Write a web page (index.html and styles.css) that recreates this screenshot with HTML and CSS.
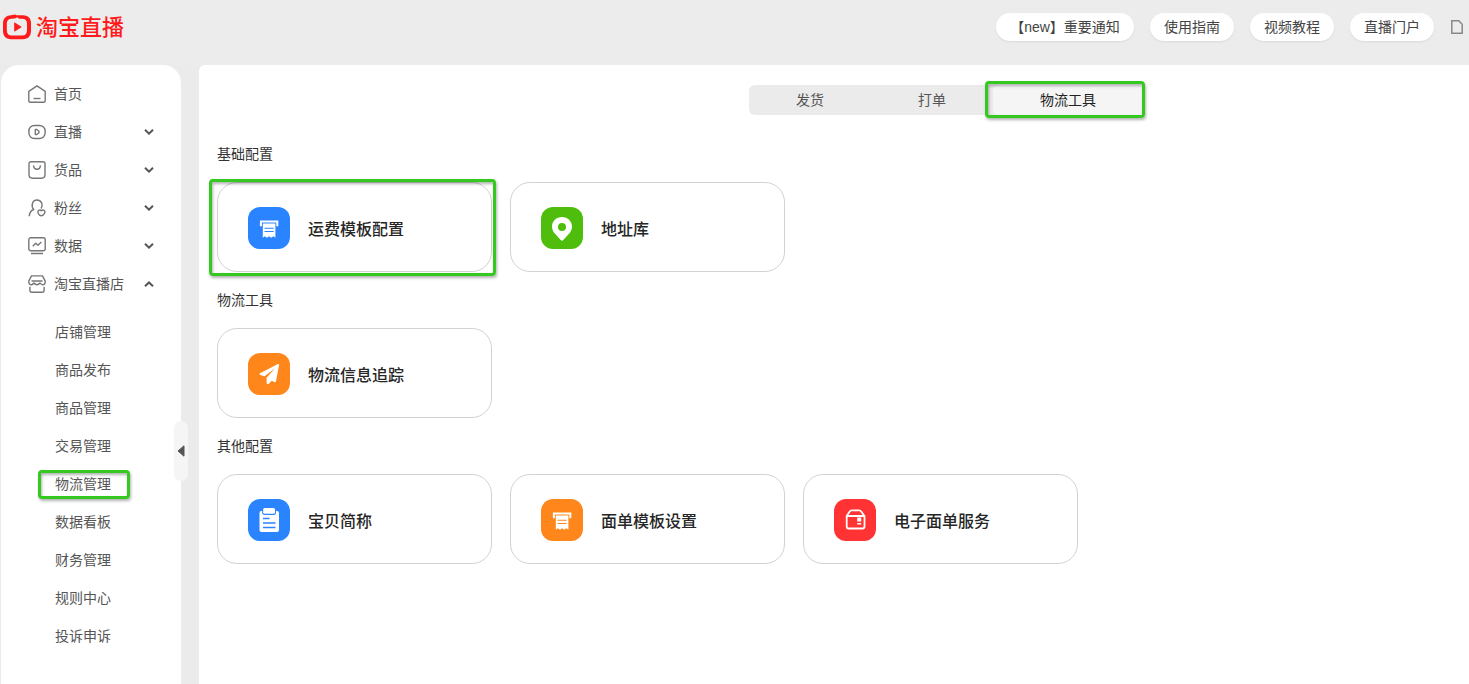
FILE: index.html
```html
<!DOCTYPE html>
<html lang="zh-CN">
<head>
<meta charset="utf-8">
<title>淘宝直播</title>
<link rel="stylesheet" href="styles.css">
</head>
<body>
<svg class="defs" width="0" height="0">
  <symbol id="chevron" viewBox="0 0 10 6"><path d="M1 .8 5 4.600 9 .8" fill="none" stroke="#555" stroke-width="2"/></symbol>
  <symbol id="receipt" viewBox="0 0 42 42"><path d="M12.900 19.300v-4.700h16.400v4.700" fill="none" stroke="#fff" stroke-width="2"/><path d="M14.800 16.500h12.600v14.300l-2-1.500-2.200 1.500-2.100-1.500-2.100 1.500-2.200-1.500-2 1.500z" fill="#fff"/><path d="M16.500 21.300h9.200M16.500 24.500h9.200" stroke="currentColor" stroke-width="1.100"/></symbol>
</svg>
<header class="header">
  <div class="logo">
    <svg width="30" height="26" viewBox="0 0 30 26"><path fill="#ff1b1b" fill-rule="evenodd" d="M10 1 13 .6l1.600.6h6.700c4.800.3 7.700 2.900 7.700 8v7.600c0 5.400-2.900 8.400-8 8.400H9c-5 0-8-3-8-8.400V9.200C1 4.300 4.500 1.200 9 1.200zM9.800 4.700C6.500 4.700 4.800 6.500 4.800 9.500v6.700c0 3.500 1.700 5.200 5 5.200h10.200c3.300 0 5-1.700 5-5.200V9.500c0-3.200-1.700-4.800-5-4.800h-3l-1.600-1.500-1.600 1z"/><path d="M12.600 8.800v8.400l6.600-4.200z" fill="#ff1b1b" stroke="#ff1b1b" stroke-width=".8" stroke-linejoin="round"/></svg>
    <span class="logo-text">淘宝直播</span>
  </div>
  <nav class="links">
    <a class="pill pill-new">【<span class="latin">new</span>】重要通知</a><a class="pill">使用指南</a><a class="pill">视频教程</a><a class="pill">直播门户</a>
    <svg class="doc" width="12" height="14" viewBox="0 0 12 14"><path d="M.8.8h7L11.200 4.200v9H.8z" fill="none" stroke="#888" stroke-width="1.500"/></svg>
  </nav>
</header>
<div class="body">
  <aside class="sidebar">
    <ul class="menu">
      <li><svg class="ico" viewBox="0 0 18 18"><path d="M.8 6.400 9 .8l8.200 5.600v9.300q0 1.500-1.500 1.500H2.300q-1.500 0-1.500-1.500z"/><path d="M5.500 13.500h7"/></svg><span>首页</span></li>
      <li><svg class="ico" viewBox="0 0 18 18"><rect x=".9" y="2.500" width="16.200" height="13" rx="5.500"/><path d="M7.300 6.500h1.500L11 8.200v1.600l-2.200 1.700H7.300z"/></svg><span>直播</span><svg class="chev"><use href="#chevron"/></svg></li>
      <li><svg class="ico" viewBox="0 0 18 18"><path d="M3 .8h12q2 0 2 2v10.700q0 3.700-3.500 3.700h-9Q1 17.200 1 13.500V2.800q0-2 2-2z"/><path d="M5.500 4.300q.5 3.900 3.500 3.900t3.500-3.900"/></svg><span>货品</span><svg class="chev"><use href="#chevron"/></svg></li>
      <li><svg class="ico" viewBox="0 0 18 18"><path d="M1.300 17.300c.1-3.800 1.500-5.800 4.500-6.800C2.800 7.500 4 1 9 1c5 0 6.300 5.300 4 8.500"/><path d="M13.200 11.800c1.500-1.800 4.800-.3 3.300 2.500-1 1.700-2 2.400-3.300 2.400s-2.300-.7-3-2.400c-1.200-2.800 1.700-4.300 3-2.500z"/></svg><span>粉丝</span><svg class="chev"><use href="#chevron"/></svg></li>
      <li><svg class="ico" viewBox="0 0 18 18"><rect x=".8" y=".8" width="16.400" height="13" rx="2"/><path d="M4.800 9.300 7.700 6.300l2.300 2L13.300 5M3 16.500h12"/></svg><span>数据</span><svg class="chev"><use href="#chevron"/></svg></li>
      <li><svg class="ico" viewBox="0 0 18 18"><path d="M3.500.9h11l2.700 5.200v1.600Q16.500 9.800 14.800 9.800T12 8q-1.300 1.700-3 1.700T6 8Q4.800 9.800 3.200 9.800T.8 7.700V6.100zM3.500 6h11M1.900 11.800v3.500q0 1.900 1.900 1.900h10.400q1.900 0 1.900-1.900v-3.500"/></svg><span>淘宝直播店</span><svg class="chev up"><use href="#chevron"/></svg></li>
    </ul>
    <ul class="submenu">
      <li>店铺管理</li><li>商品发布</li><li>商品管理</li><li>交易管理</li><li class="marked">物流管理</li><li>数据看板</li><li>财务管理</li><li>规则中心</li><li>投诉申诉</li>
    </ul>
    <div class="handle"><svg width="8" height="12" viewBox="0 0 8 12"><path d="M7 .8v10.400L1 6z" fill="#555" stroke="#555" stroke-linejoin="round"/></svg></div>
  </aside>
  <main class="main">
    <div class="tabs"><div class="tab">发货</div><div class="tab">打单</div><div class="tab active">物流工具</div></div>
    <section>
      <h2>基础配置</h2>
      <div class="cards">
        <div class="card marked"><svg class="tile blue" viewBox="0 0 42 42"><use href="#receipt"/></svg><span>运费模板配置</span></div>
        <div class="card"><svg class="tile green" viewBox="0 0 42 42"><path fill="#fff" fill-rule="evenodd" d="M21 10c-5.700 0-10 4.200-10 9.500 0 3 1.200 5.300 3 7.300l5.700 6.200q1.300 1.400 2.600 0l5.700-6.200c1.800-2 3-4.300 3-7.300C31 14.200 26.700 10 21 10zm0 6a4 4 0 1 1 0 8 4 4 0 0 1 0-8z"/></svg><span>地址库</span></div>
      </div>
    </section>
    <section>
      <h2>物流工具</h2>
      <div class="cards">
        <div class="card"><svg class="tile orange" viewBox="0 0 42 42"><path fill="#fff" d="M29.500 11.200c1-.4 1.700.2 1.500 1.200l-3 15.800c-.2 1-1 1.300-1.800.9l-2.500-1.300-2.800 3c-.8.7-2.200.4-2.300-.7v-5.400l8.300-9.200-10.300 7.700-4.500-1.300c-1-.4-1-1.200-.1-1.700z"/></svg><span>物流信息追踪</span></div>
      </div>
    </section>
    <section>
      <h2>其他配置</h2>
      <div class="cards">
        <div class="card"><svg class="tile blue" viewBox="0 0 42 42"><path fill="#fff" d="M13 12h1.200v1.500q0 2.500 2.500 2.500h8.800q2.500 0 2.500-2.500V12h1q2 0 2 2v17q0 2-2 2H13.500q-2 0-2-2V14q0-2 1.500-2z"/><rect x="15.200" y="9" width="11.800" height="5.800" rx="1.500" fill="#fff"/><path d="M15 19.500h6.500M15 24h12.500M15 28.500h12.500" stroke="currentColor" stroke-width="1.400"/></svg><span>宝贝简称</span></div>
        <div class="card"><svg class="tile orange" viewBox="0 0 42 42"><use href="#receipt"/></svg><span>面单模板设置</span></div>
        <div class="card"><svg class="tile red" viewBox="0 0 42 42"><path d="M12.700 17h17.800v10.500q0 2-2 2H14.700q-2 0-2-2zl2.800-4.300q1-1.300 2.200-1.300h7.500q1.200 0 2.200 1.300l3 4.300" fill="none" stroke="#fff" stroke-width="1.800" stroke-linejoin="round"/><path d="M23.200 18.500h4v4h-4zM23.200 24h4v1.600h-4z" fill="#fff"/></svg><span>电子面单服务</span></div>
      </div>
    </section>
  </main>
</div>
</body>
</html>
```
FILE: styles.css
```css
*, *::after { box-sizing: border-box; }
body { margin: 0; height: 684px; overflow: hidden; background: #ebebeb; color: #555; font: 14px/20px "Noto Sans CJK SC", sans-serif; }
ul { list-style: none; margin: 0; padding: 0; }
.defs { position: absolute; }
.header { height: 65px; background: #ececec; display: flex; justify-content: space-between; align-items: flex-start; }
.logo { display: flex; gap: 4px; padding: 14px 0 0 2px; }
.logo-text { font-size: 22px; line-height: 22px; font-weight: 500; color: #ff1b1b; }
.links { display: flex; gap: 16px; padding: 13px 6px 0 0; align-items: center; }
.pill { width: 84px; height: 28px; border-radius: 14px; background: #fff; line-height: 26px; text-align: center; box-shadow: 0 1px 2px rgba(0,0,0,.08); white-space: nowrap; color: #444; }
.pill-new { width: 138px; }
.latin { font-family: "Liberation Sans", sans-serif; }
.doc { flex: none; margin-left: 1px; }
.body { display: flex; height: 619px; padding-left: 1px; gap: 18px; }
.sidebar { position: relative; width: 180px; flex: none; background: #fff; border-radius: 18px 18px 0 0; padding-top: 10px; }
.menu li { height: 38px; display: flex; align-items: center; padding: 0 27px; gap: 8px; }
.menu span { padding-bottom: 2px; }
.ico { width: 18px; height: 18px; fill: none; stroke: #777; stroke-width: 1.400; stroke-linejoin: round; flex: none; }
.chev { width: 10px; height: 6px; margin: 0 0 1px auto; flex: none; }
.chev.up { transform: rotate(180deg); margin-bottom: 0; }
.submenu { padding: 10px 0 0 54px; }
.submenu li { height: 38px; line-height: 36px; position: relative; }
.handle { position: absolute; left: 173px; top: 356px; width: 14px; height: 60px; border-radius: 7px; background: #f5f5f5; display: flex; align-items: center; justify-content: center; }
.main { flex: 1; background: #fff; border-radius: 6px 0 0 0; padding: 20px 18px 0; }
.tabs { display: flex; width: 394px; height: 30px; margin: 0 0 26px 532px; background: #ebebeb; border-radius: 6px; line-height: 28px; text-align: center; }
.tab { width: 122px; }
.tab.active { position: relative; width: 150px; background: #f5f5f5; border-radius: 6px; color: #222; }
h2 { margin: 0; height: 26px; font-size: 14px; line-height: 24px; font-weight: 400; color: #333; }
section { height: 146px; }
.cards { display: flex; gap: 18px; padding-top: 15px; }
.card { position: relative; width: 275px; height: 90px; border: 1px solid #d2d2d2; border-radius: 20px; display: flex; align-items: center; gap: 18px; padding: 2px 30px 0; font-size: 16px; line-height: 24px; font-weight: 500; color: #262626; }
.tile { width: 42px; height: 42px; border-radius: 12px; flex: none; }
.blue { background: #2a84ff; color: #2a84ff; }
.green { background: #4fbd0b; }
.orange { background: #ff861b; color: #ff861b; }
.red { background: #ff3333; }
.marked::after, .tab.active::after { content: ""; position: absolute; border: 3px solid #35c820; border-radius: 4px; box-shadow: 1px 2px 3px rgba(0,0,0,.3), inset 1px 2px 3px rgba(0,0,0,.3); }
.submenu .marked::after { left: -17px; top: 5px; width: 92px; height: 29px; }
.card.marked::after { left: -9px; top: -4px; width: 287px; height: 97px; }
.tab.active::after { left: -8px; top: -4px; width: 160px; height: 37px; }
```
